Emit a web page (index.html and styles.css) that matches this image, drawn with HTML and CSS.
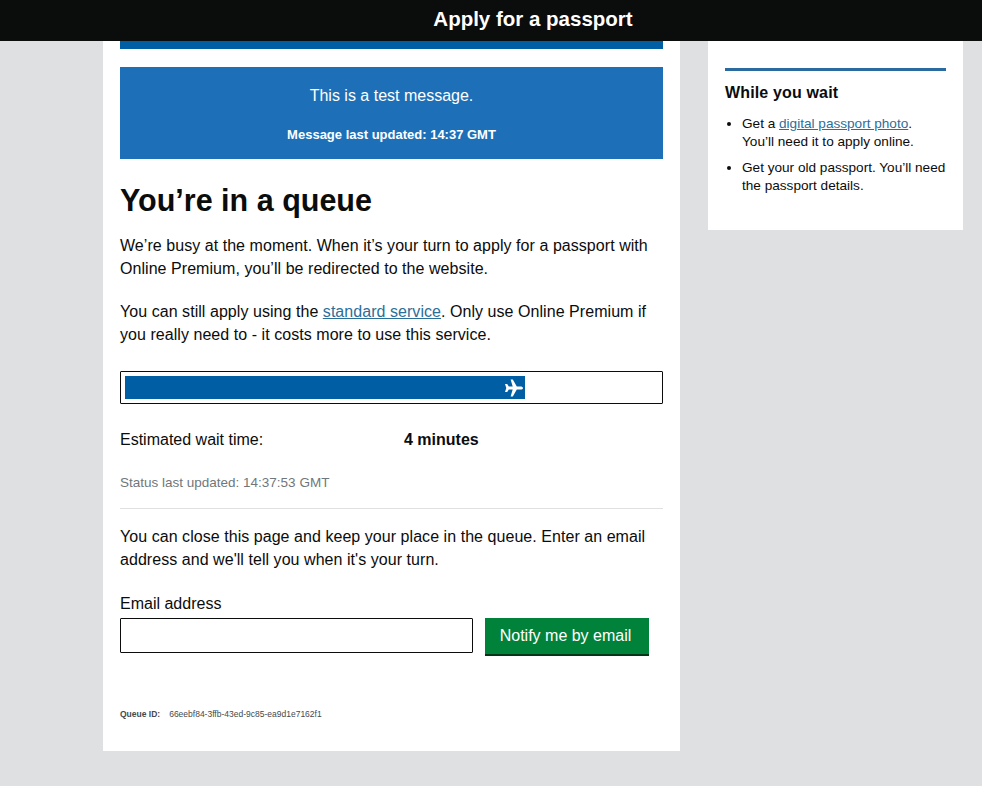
FILE: index.html
```html
<!DOCTYPE html>
<html lang="en">
<head>
  <meta charset="UTF-8">
  <meta name="viewport" content="width=device-width, initial-scale=1.0">
  <title>Apply for a passport</title>
  <link rel="stylesheet" href="styles.css">
</head>
<body>
  <header class="site-header">
    <span class="service-name">Apply for a passport</span>
  </header>

  <div class="page">
    <main class="content">
      <div class="top-strip"></div>

      <div class="message">
        <p class="message-text">This is a test message.</p>
        <p class="message-time">Message last updated: 14:37 GMT</p>
      </div>

      <h1>You’re in a queue</h1>
      <p class="body-text">We’re busy at the moment. When it’s your turn to apply for a passport with Online Premium, you’ll be redirected to the website.</p>
      <p class="body-text">You can still apply using the <a href="#">standard service</a>. Only use Online Premium if you really need to - it costs more to use this service.</p>

      <div class="progress">
        <div class="progress-bar" style="width: 75%">
          <svg class="plane" viewBox="0 0 20 20" width="20" height="20" aria-hidden="true">
            <path d="M19 10c0-1-1.200-1.600-2.600-1.600h-3.600L8.800 1.500H6.600l2.100 6.900H4.800L3.200 6H1l1.300 4L1 14h2.200l1.600-2.400h3.900l-2.100 6.900h2.200l4-6.900h3.600c1.400 0 2.600-.6 2.600-1.600z" fill="#fff"/>
          </svg>
        </div>
      </div>

      <div class="wait-row">
        <span class="wait-label">Estimated wait time:</span>
        <strong>4 minutes</strong>
      </div>
      <p class="status-time">Status last updated: 14:37:53 GMT</p>

      <hr class="divider">

      <p class="body-text">You can close this page and keep your place in the queue. Enter an email address and we'll tell you when it's your turn.</p>

      <form class="email-form">
        <label class="email-label" for="email">Email address</label>
        <div class="email-row">
          <input id="email" class="email-input" type="text">
          <button class="btn" type="button">Notify me by email</button>
        </div>
      </form>

      <p class="queue-id"><b>Queue ID:</b><span>66eebf84-3ffb-43ed-9c85-ea9d1e7162f1</span></p>
    </main>

    <aside class="sidebar">
      <h2>While you wait</h2>
      <ul>
        <li>Get a <a href="#">digital passport photo</a>.<br>You’ll need it to apply online.</li>
        <li>Get your old passport. You’ll need the passport details.</li>
      </ul>
    </aside>
  </div>
</body>
</html>
```

FILE: styles.css
```css
html, body {
  height: 100%;
}
body {
  font-family: "Liberation Sans", Arial, sans-serif;
  margin: 0;
  color: #0b0c0c;
  background-color: #dee0e2;
  overflow: hidden;
}
a {
  color: #2b6f99;
}
.site-header {
  height: 38px;
  padding: 0 0 3px 84px;
  background-color: #0b0c0c;
  color: white;
  display: flex;
  align-items: center;
  justify-content: center;
}
.service-name {
  font-size: 20.5px;
  font-weight: bold;
}
.page {
  display: flex;
  align-items: flex-start;
  gap: 28px;
  padding-left: 103px;
}
.content {
  width: 543px;
  height: 710px;
  padding: 0 17px;
  background-color: white;
}
.top-strip {
  height: 8px;
  background-color: #005ea5;
}
.message {
  margin-top: 18px;
  height: 92px;
  box-sizing: border-box;
  padding-top: 19px;
  background-color: #1d70b8;
  color: white;
  text-align: center;
}
.message-text {
  margin: 0;
  font-size: 16px;
  line-height: 20px;
}
.message-time {
  margin: 20px 0 0;
  font-size: 13px;
  line-height: 18px;
  font-weight: bold;
}
h1 {
  margin: 22px 0 0;
  font-size: 30.5px;
  line-height: 38px;
}
.body-text {
  margin: 0 0 21px;
  font-size: 16px;
  line-height: 22.5px;
  letter-spacing: 0.05px;
}
h1 + .body-text {
  margin-top: 16px;
}
.progress {
  height: 33px;
  box-sizing: border-box;
  margin-top: 25px;
  padding: 4px;
  border: 1px solid #0b0c0c;
  border-radius: 1px;
}
.progress-bar {
  height: 100%;
  display: flex;
  justify-content: flex-end;
  align-items: center;
  background-color: #005ea5;
}
.plane {
  display: block;
  margin-right: 1px;
}
.wait-row {
  display: flex;
  margin-top: 26px;
  font-size: 16px;
  line-height: 20px;
}
.wait-label {
  width: 284px;
}
.status-time {
  margin: 24px 0 0;
  font-size: 13.5px;
  line-height: 18px;
  color: #6f777b;
}
.divider {
  margin: 16px 0 17px;
  border: 0;
  border-top: 1px solid #dee0e2;
}
.email-form {
  margin-top: 23px;
}
.email-label {
  display: block;
  font-size: 16px;
  line-height: 20px;
}
.email-row {
  display: flex;
  align-items: flex-start;
  gap: 12px;
  margin-top: 4px;
}
.email-input {
  width: 353px;
  height: 35px;
  box-sizing: border-box;
  margin: 0;
  border: 1px solid #0b0c0c;
  border-radius: 1px;
  background: white;
}
.btn {
  width: 164px;
  height: 38px;
  padding: 0 3px 0 0;
  border: 0;
  border-bottom: 2px solid #003618;
  border-radius: 0;
  background-color: #00823b;
  color: white;
  font-family: inherit;
  font-size: 16px;
}
.queue-id {
  margin: 52px 0 0;
  font-size: 8.5px;
  line-height: 12px;
  color: #454a4c;
}
.queue-id b {
  margin-right: 9px;
}
.sidebar {
  width: 255px;
  height: 189px;
  box-sizing: border-box;
  padding: 27px 17px 0;
  background-color: white;
}
.sidebar h2 {
  margin: 0;
  padding-top: 11px;
  border-top: 3px solid #2b6a9e;
  font-size: 16px;
  line-height: 22px;
  letter-spacing: 0.15px;
}
.sidebar ul {
  margin: 11px 0 0;
  padding-left: 17px;
  font-size: 13.6px;
  line-height: 18px;
}
.sidebar li {
  margin-bottom: 8px;
}
```
